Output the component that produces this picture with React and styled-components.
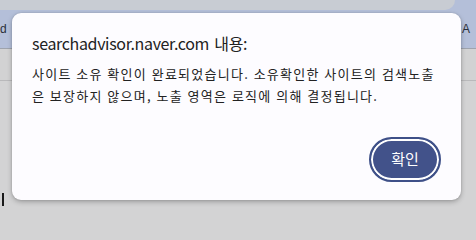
import React from "react";
import styled, { createGlobalStyle } from "styled-components";

const GlobalStyle = createGlobalStyle`
  html, body {
    margin: 0;
    padding: 0;
    width: 476px;
    height: 218px;
    overflow: hidden;
    background: #d3d3d4;
  }
  * {
    box-sizing: border-box;
  }
`;

const Page = styled.div`
  position: relative;
  width: 476px;
  height: 218px;
  display: flex;
  flex-direction: column;
  font-family: "Noto Sans CJK KR", "Noto Sans", sans-serif;
`;

const TopBand = styled.div`
  display: flex;
  height: 10px;
  background: #b4bfd9;
`;

const Tab = styled.div`
  width: 455px;
  height: 10px;
  background: #c8ccd3;
  border-bottom-right-radius: 12px;
`;

const Toolbar = styled.div`
  display: flex;
  justify-content: space-between;
  align-items: center;
  height: 39px;
  padding: 0 6px 0 0;
  background: #b4bfd9;
  border-bottom: 1px solid #9ea3ad;
  color: #2a2f3a;
  font-size: 12px;
  font-family: "Liberation Sans", sans-serif;
`;

const Row = styled.div`
  height: 32px;
  background: #d2d2d3;
  border-bottom: 1px solid #b9b9bb;
`;

const Rest = styled.div`
  flex: 1;
  display: flex;
  align-items: flex-end;
  padding: 0 0 12px 2px;
`;

const Caret = styled.div`
  width: 2px;
  height: 13px;
  background: #1a1a1a;
`;

const Dialog = styled.div`
  position: absolute;
  left: 12px;
  top: 13px;
  width: 449px;
  height: 187px;
  display: flex;
  flex-direction: column;
  padding: 19px 20px 18px 20px;
  background: #fdfcff;
  border-radius: 9px;
  box-shadow: 0 2px 5px rgba(0, 0, 0, 0.25), 0 0 2px rgba(0, 0, 0, 0.15);
  color: #222222;
`;

const Title = styled.div`
  font-size: 16px;
  line-height: 22px;
  margin-bottom: 9px;
  letter-spacing: -0.35px;
  word-spacing: 2px;
`;

const Message = styled.div`
  font-size: 13px;
  line-height: 22px;
  letter-spacing: 1.25px;
  word-spacing: 0.5px;
  white-space: nowrap;
`;

const Actions = styled.div`
  margin-top: auto;
  display: flex;
  justify-content: flex-end;
`;

const OkButton = styled.button`
  width: 72px;
  height: 45px;
  border: 2px solid #3e5088;
  border-radius: 23px;
  box-shadow: inset 0 0 0 2px #ffffff;
  background: #42528a;
  color: #ffffff;
  font-family: "Noto Sans CJK KR", sans-serif;
  font-size: 15px;
  padding: 0 0 2px 0;
`;

const App = () => {
  return (
    <>
      <GlobalStyle />
      <Page>
        <TopBand>
          <Tab />
        </TopBand>
        <Toolbar>
          <span>d</span>
          <span>A</span>
        </Toolbar>
        <Row />
        <Rest>
          <Caret />
        </Rest>
        <Dialog>
          <Title>searchadvisor.naver.com 내용:</Title>
          <Message>
            사이트 소유 확인이 완료되었습니다. 소유확인한 사이트의 검색노출
            <br />
            은 보장하지 않으며, 노출 영역은 로직에 의해 결정됩니다.
          </Message>
          <Actions>
            <OkButton>확인</OkButton>
          </Actions>
        </Dialog>
      </Page>
    </>
  );
};

export default App;
